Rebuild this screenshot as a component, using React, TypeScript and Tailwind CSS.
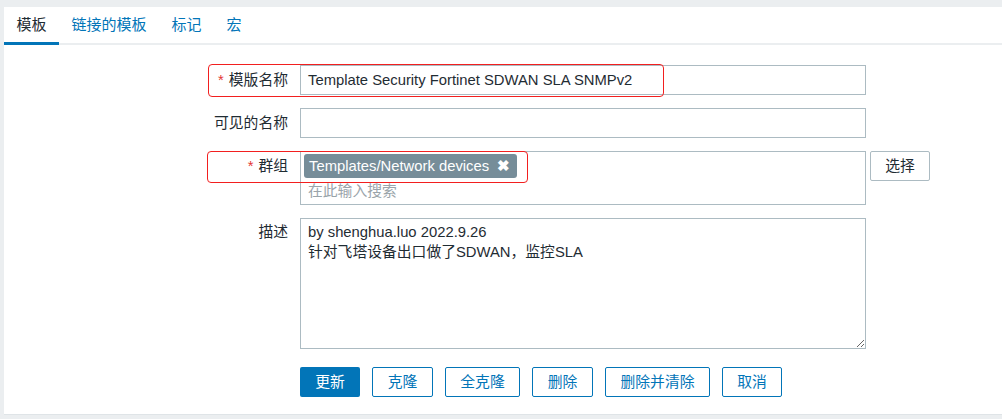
import React from "react";

const FONT = { fontFamily: '"Liberation Sans", Arial, "Noto Sans CJK SC", sans-serif' };

function Label({ text, req }: { text: string; req?: boolean }) {
  return (
    <div className="w-[284px] shrink-0 text-right h-[30px] leading-[30px] text-[#1f2c33]">
      {req && <span className="text-[#e33734] mr-[5px]">*</span>}
      {text}
    </div>
  );
}

export default function App() {
  const tabs = ["模板", "链接的模板", "标记", "宏"];
  const btns: [string, string][] = [
    ["克隆", "w-[61px]"],
    ["全克隆", "w-[75px]"],
    ["删除", "w-[61px]"],
    ["删除并清除", "w-[105px]"],
    ["取消", "w-[60px]"],
  ];
  return (
    <div className="w-[1002px] h-[419px] bg-[#ebeef0] pt-[7px] pl-[4px] overflow-hidden text-[14.8px]" style={FONT}>
      <div className="bg-white h-[408px] border-b border-[#dfe4e7]">
        <div className="flex h-[38px] border-b-2 border-[#ebeef0]">
          {tabs.map((t, i) => (
            <div
              key={t}
              className={
                "px-[12.5px] text-[15px] h-[38px] leading-[36px] -mb-[2px] border-b-[3px] " +
                (i === 0 ? "border-[#0275b8] text-[#1f2c33]" : "border-transparent text-[#0275b8]")
              }
            >
              {t}
            </div>
          ))}
        </div>

        <div className="pt-[20px] flex flex-col">
          <div className="relative flex items-start gap-[12px]">
            <Label text="模版名称" req />
            <div className="w-[566px] h-[30px] border border-[#acbbc2] px-[7px] leading-[28px] text-[#1f2c33] whitespace-nowrap">
              Template Security Fortinet SDWAN SLA SNMPv2
            </div>
            <div className="absolute left-[204px] top-[-1px] w-[456px] h-[33px] border border-[#f21f1f] rounded-[4px]" />
          </div>

          <div className="flex items-start gap-[12px] mt-[13px]">
            <Label text="可见的名称" />
            <div className="w-[566px] h-[30px] border border-[#acbbc2]" />
          </div>

          <div className="relative flex items-start mt-[13px]">
            <Label text="群组" req />
            <div className="ml-[12px] w-[566px] h-[54px] border border-[#acbbc2] pl-[3px] pt-[2px]">
              <div className="inline-flex items-center h-[24px] bg-[#768d99] text-white rounded-[3px] pl-[5px] pr-[7px] leading-[24px] whitespace-nowrap">
                Templates/Network devices
                <span className="ml-[8px] font-bold text-[15px]">✖</span>
              </div>
              <div className="pl-[4px] text-[#9aa4aa] leading-[24px] mt-[1px]">在此输入搜索</div>
            </div>
            <div className="ml-[4px] w-[60px] h-[30px] border border-[#acbbc2] rounded-[2px] text-center leading-[28px] text-[#1f2c33]">
              选择
            </div>
            <div className="absolute left-[203px] top-0 w-[321px] h-[32px] border border-[#f21f1f] rounded-[4px]" />
          </div>

          <div className="flex items-start gap-[12px] mt-[13px]">
            <div className="w-[284px] shrink-0 text-right leading-[20px] pt-[4px] text-[#1f2c33]">描述</div>
            <textarea
              className="w-[566px] h-[131px] border border-[#acbbc2] px-[7px] pt-[3px] leading-[20px] text-[#1f2c33] outline-none resize"
              style={FONT}
              defaultValue={"by shenghua.luo 2022.9.26\n针对飞塔设备出口做了SDWAN，监控SLA"}
            />
          </div>

          <div className="flex gap-[12px] ml-[296px] mt-[18px]">
            <div className="w-[60px] h-[30px] bg-[#0275b8] text-white rounded-[2px] text-center leading-[30px]">更新</div>
            {btns.map(([t, w]) => (
              <div
                key={t}
                className={w + " h-[30px] border border-[#0275b8] text-[#0275b8] rounded-[2px] text-center leading-[28px]"}
              >
                {t}
              </div>
            ))}
          </div>
        </div>
      </div>
    </div>
  );
}
